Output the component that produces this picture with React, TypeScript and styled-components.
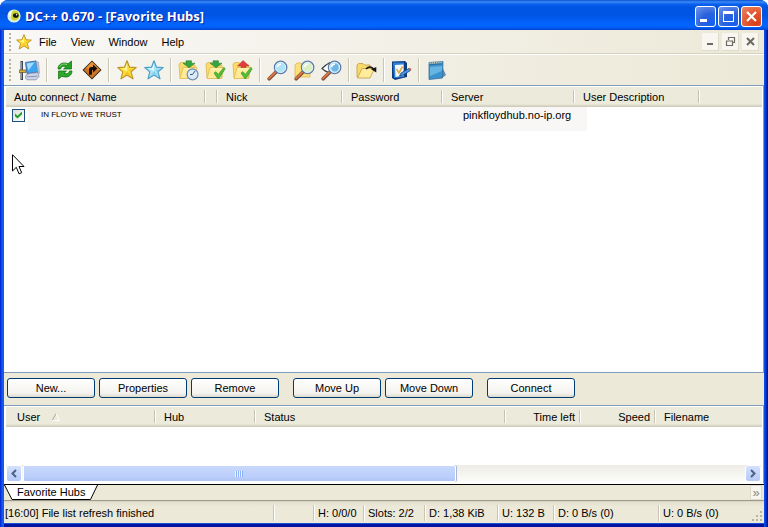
import React from "react";
import styled, { createGlobalStyle } from "styled-components";

const GlobalStyle = createGlobalStyle`
  * { box-sizing: border-box; }
  html, body { margin: 0; background: #fff; }
  body, button, input, table {
    font-family: "Liberation Sans", Arial, sans-serif;
    font-size: 11px;
    line-height: 14px;
    color: #000;
  }
  button { margin: 0; padding: 0; border: 0; background: none; }
  svg { display: block; }
`;

const Window = styled.main`
  display: flex;
  flex-direction: column;
  height: 100vh;
  min-height: 400px;
  border: 0 solid;
  border-radius: 8px 8px 0 0;
  overflow: hidden;
  background: linear-gradient(to right, #0019cf 0, #0a3fe0 1px, #1664f0 3px, #0b55e4 4px, #0b55e4 calc(100% - 4px), #0a4be8 calc(100% - 3px), #0030cc calc(100% - 2px), #00138c 100%);
`;

const TitleBar = styled.header`
  flex: none;
  display: flex;
  align-items: center;
  gap: 4px;
  height: 30px;
  padding: 2px 6px 0 7px;
  background: linear-gradient(to bottom, #0a4fd0 0, #3a8cf8 2px, #0b62ee 4px, #0054e3 7px, #0055e5 16px, #0262fb 22px, #0264fe 26px, #0059ee 28px, #0042cc 30px);
`;

const Title = styled.h1`
  flex: 1;
  margin: 0;
  font-family: "Noto Sans", "Open Sans", sans-serif;
  font-size: 13px;
  line-height: 20px;
  font-weight: 700;
  color: #fff;
  text-shadow: 1px 1px 0 #0a1883;
  white-space: nowrap;
`;

const CaptionButtons = styled.div`
  display: flex;
  gap: 2px;
`;

const CaptionButton = styled.button<{ $close?: boolean }>`
  display: grid;
  place-items: center;
  width: 21px;
  height: 21px;
  border: 1px solid #fff;
  border-radius: 3px;
  background: ${(p) =>
    p.$close
      ? "radial-gradient(circle at 75% 85%, #d8401a, #e2542c 45%, #e98a68 100%)"
      : "radial-gradient(circle at 75% 85%, #1560f0, #2c62dc 45%, #6f97ee 100%)"};
`;

const Client = styled.div`
  flex: 1;
  min-height: 0;
  display: flex;
  flex-direction: column;
  margin: 0 4px 4px 4px;
  background: #ece9d8;
  box-shadow: 0 1px 0 #1a4fd8, 0 4px 0 #0016a0;
`;

const MenuRow = styled.div`
  flex: none;
  display: flex;
  align-items: center;
  height: 24px;
  padding: 0 5px;
  background: linear-gradient(to right, #f9f8f6, #ece9d8);
  border-bottom: 1px solid #d5d2c0;
`;

const ToolRow = styled.div`
  flex: none;
  display: flex;
  align-items: center;
  height: 31px;
  padding: 0 5px;
  border-top: 1px solid #fff;
  background: linear-gradient(to right, #f6f5f0, #ece9d8);
`;

const Grip = styled.span<{ $tall?: boolean }>`
  flex: none;
  width: 2px;
  height: ${(p) => (p.$tall ? "22px" : "18px")};
  background: repeating-linear-gradient(to bottom, #b5b2a4 0 2px, transparent 2px 4px);
`;

const Menu = styled.nav`
  flex: 1;
  display: flex;
  align-items: center;
  margin-left: 5px;
  gap: 7px;
`;

const MenuItems = styled.div`
  display: flex;
  gap: 14px;
`;

const MdiButtons = styled.div`
  display: flex;
  gap: 3px;
`;

const MdiButton = styled.button`
  display: grid;
  place-items: center;
  width: 17px;
  height: 18px;
  background: #f7f6f1;
  border-right: 1px solid #dedbcb;
  border-bottom: 1px solid #dedbcb;
`;

const Tools = styled.div`
  display: flex;
  align-items: center;
  margin-left: 5px;
`;

const ToolButton = styled.button`
  display: grid;
  place-items: center;
  width: 27px;
  height: 26px;
`;

const Divider = styled.span`
  width: 2px;
  height: 24px;
  margin: 0 3px;
  background: linear-gradient(to right, #c9c6b6 50%, #fff 50%);
`;

const ListPane = styled.section<{ $fill?: boolean }>`
  position: relative;
  flex: ${(p) => (p.$fill ? "1 1 0" : "none")};
  height: ${(p) => (p.$fill ? "auto" : "79px")};
  min-height: 0;
  display: flex;
  flex-direction: column;
  border: 1px solid #7f9db9;
  border-left-width: 0;
  border-bottom-color: ${(p) => (p.$fill ? "#7f9db9" : "#fff")};
  padding: 1px 1px 1px 2px;
  background: #fff;
  overflow: hidden;
`;

const ListTable = styled.table`
  width: 100%;
  table-layout: fixed;
  border-collapse: separate;
  border-spacing: 0;
`;

const Col = styled.col<{ $w?: number }>`
  width: ${(p) => (p.$w ? `${p.$w}px` : "auto")};
`;

const headShade = "linear-gradient(to bottom, #ebeadb 17px, #e2decd 18px, #d6d2c2 19px, #cbc7b8 20px)";

const HeadCell = styled.th<{ $right?: boolean; $last?: boolean }>`
  height: 20px;
  padding: 0 ${(p) => (p.$right ? "6px" : "0")} 0 8px;
  text-align: ${(p) => (p.$right ? "right" : "left")};
  font-weight: 400;
  white-space: nowrap;
  background: ${(p) =>
    p.$last
      ? headShade
      : `linear-gradient(#fff, #fff) right 0 top 3px / 1px 13px no-repeat, linear-gradient(#c5c2b2, #c5c2b2) right 1px top 3px / 1px 13px no-repeat, ${headShade}`};
`;

const SortMark = styled.svg`
  display: inline-block;
  margin-left: 12px;
`;

const HubRow = styled.tr`
  background: linear-gradient(to right, transparent 22px, #f9f7f5 22px 581px, transparent 581px) no-repeat;
`;

const HubCell = styled.td<{ $indent?: boolean }>`
  height: 24px;
  padding: 0 0 8px ${(p) => (p.$indent ? "20px" : "6px")};
  white-space: nowrap;
`;

const HubName = styled.div`
  display: flex;
  align-items: center;
  gap: 16px;
`;

const HubLabel = styled.label`
  font-size: 8px;
`;

const Check = styled.input`
  appearance: none;
  flex: none;
  display: grid;
  place-items: center;
  width: 13px;
  height: 13px;
  margin: 0;
  border: 1px solid #1c5180;
  background: linear-gradient(135deg, #dcdcd7, #fff);
  &:checked::after {
    content: "";
    width: 7px;
    height: 7px;
    background: #21a121;
    clip-path: polygon(0 29%, 36% 62%, 100% 0, 100% 40%, 36% 100%, 0 68%);
  }
`;

const Pointer = styled.svg`
  position: absolute;
  left: 8px;
  top: 68px;
`;

const Actions = styled.div`
  flex: none;
  display: flex;
  gap: 14px;
  height: 32px;
  padding: 5px 3px;
`;

const ActionGroup = styled.div`
  display: flex;
  gap: 4px;
`;

const Action = styled.button`
  width: 88px;
  height: 20px;
  border: 1px solid #003c74;
  border-radius: 3px;
  background: linear-gradient(to bottom, #fff, #f3f2ed 80%, #dcd8cb);
`;

const ScrollBar = styled.div`
  flex: none;
  display: flex;
  gap: 1px;
  height: 17px;
  margin: auto 1px 0 0;
  background: linear-gradient(to bottom, #edece5, #fcfcfa);
`;

const ScrollButton = styled.button`
  flex: none;
  display: grid;
  place-items: center;
  width: 16px;
  height: 17px;
  border: 1px solid #fff;
  border-radius: 3px;
  background: linear-gradient(to bottom, #d4e0fd, #b5caf8);
`;

const Track = styled.div`
  flex: 1;
  display: flex;
`;

const Thumb = styled.div`
  display: grid;
  place-items: center;
  width: 60%;
  border: 1px solid #fff;
  border-radius: 2px;
  background: linear-gradient(to bottom, #c9d8fc, #bbcffb 70%, #b0c5f4);
  box-shadow: 1px 0 0 #a9b7d1;
`;

const ThumbLines = styled.span`
  width: 8px;
  height: 6px;
  background: repeating-linear-gradient(to right, #eef4fe 0 1px, #8cb0f8 1px 2px);
`;

const TabStrip = styled.div`
  flex: none;
  display: flex;
  align-items: flex-start;
  justify-content: space-between;
  height: 17px;
  border-top: 1px solid #000;
  border-bottom: 1px solid #9d9a8c;
`;

const Tab = styled.button`
  display: flex;
  height: 15px;
`;

const TabText = styled.span`
  height: 15px;
  padding: 0 4px 0 0;
  background: #fff;
  border-bottom: 1px solid #000;
`;

const Chevron = styled.button`
  width: 12px;
  height: 15px;
  margin-right: 2px;
  font-size: 13px;
  line-height: 12px;
  color: #8b887b;
  background: #f6f5ef;
  border: 1px solid #dedbcc;
`;

const StatusBar = styled.footer`
  flex: none;
  position: relative;
  display: flex;
  align-items: center;
  height: 22px;
  border-top: 1px solid #dad6c5;
  background: linear-gradient(to bottom, #e4e1d0, #ece9d8 5px);
`;

const Pane = styled.div<{ $w?: number }>`
  flex: ${(p) => (p.$w ? `0 0 ${p.$w}px` : "1 1 0")};
  height: 16px;
  padding: 1px 0 0 ${(p) => (p.$w ? "3px" : "1px")};
  border-left: ${(p) => (p.$w ? "1px solid #fff" : "0")};
  box-shadow: ${(p) => (p.$w ? "-1px 0 0 #c8c5b4" : "none")};
  white-space: nowrap;
  overflow: visible;
`;

const SizeGrip = styled.svg`
  position: absolute;
  right: 1px;
  bottom: 1px;
`;

const starPath = "M10 0.8 L12.5 7.2 L19.2 7.6 L14 11.8 L16 18.8 L10 15 L4 18.8 L5.8 11.9 L0.8 7.6 L7.5 7.2 Z";

function StarIcon({ size = 20, blue = false }: { size?: number; blue?: boolean }) {
  return (
    <svg width={size} height={size} viewBox="0 0 20 20">
      <path d={starPath} fill={blue ? "#a9e4fb" : "#ffdf35"} stroke={blue ? "#4a9fc6" : "#bd9426"} strokeWidth="1.2" strokeLinejoin="round" />
      <path d="M10 3 L10 11 L4 8.4 L8.2 8.2 Z" fill={blue ? "#e4f8ff" : "#fff6a0"} />
      <path d="M10 11 L14.5 17 L10 14 L6 17 Z M11 10 L16.8 8.4 L12.8 11.6 Z" fill={blue ? "#86cfee" : "#f7c22c"} />
    </svg>
  );
}

function ConnectIcon() {
  return (
    <svg width="21" height="21" viewBox="0 0 21 21">
      <path d="M1.5 1 H4 V20 H1.5 Z" fill="#3e4656" />
      <path d="M2.5 2 V19" stroke="#8d97ac" />
      <path d="M0 10 H7 V12.5 H0 Z" fill="#d9b23a" stroke="#54471a" strokeWidth=".6" />
      <path d="M6.5 2.5 L17 1 L19 12 L8 13.5 Z" fill="#3aa6ec" stroke="#4b6cae" />
      <path d="M7.5 3.5 L15.5 2.3 L9.5 10.5 Z" fill="#a4dcff" />
      <path d="M17 1 L19.6 2.2 L20.5 13.4 L18.8 12 Z" fill="#bcc6dc" stroke="#8391b4" strokeWidth=".5" />
      <path d="M7 15 L11 13.3 L19 12.6 L20 16.5 L17 19.8 H8 L6.5 18 Z" fill="#cfd5e8" stroke="#7481a6" strokeWidth=".7" />
      <path d="M8 16.8 L18.5 16.2" stroke="#8793b6" />
    </svg>
  );
}

function RefreshIcon() {
  return (
    <svg width="20" height="20" viewBox="0 0 20 20">
      <path d="M3 9 C3 4 8 1.5 13 3.8 L16.5 1 V9 H8.5 L11 6.7 C8 5.5 6 6.7 5.6 9 Z" fill="#25a022" stroke="#0d6a11" strokeWidth=".7" />
      <path d="M17 11 C17 16 12 18.5 7 16.2 L3.5 19 V11 H11.5 L9 13.3 C12 14.5 14 13.3 14.4 11 Z" fill="#2aaa28" stroke="#0d6a11" strokeWidth=".7" />
      <path d="M4.7 7 C6 4 9 3.4 12 4.6" stroke="#8fdc7d" fill="none" />
    </svg>
  );
}

function RedirectIcon() {
  return (
    <svg width="20" height="20" viewBox="0 0 20 20">
      <path d="M10 .5 L19.5 10 L10 19.5 L.5 10 Z" fill="#302013" />
      <path d="M10 1.8 L18.2 10 L10 18.2 L1.8 10 Z" fill="#c9762a" />
      <path d="M10 1.8 L18.2 10 H10 L4 8 Z" fill="#e59339" />
      <path d="M7 15 V9 Q7 7 9.5 7 H11 V4.5 L15.5 8.5 L11 12.5 V10 H10 V14.5 Z" fill="#15100b" />
    </svg>
  );
}

function FolderIcon({ up = false, clock = false }: { up?: boolean; clock?: boolean }) {
  return (
    <svg width="21" height="21" viewBox="0 0 21 21">
      <path d="M1 4 L3 2.5 H7 L9 5 H17 V18 H2 Z" fill="#fbdc6c" stroke="#dcb652" strokeWidth=".8" />
      <path d="M2 18.5 L5 7.5 H19 L16 18.5 Z" fill="#ffeb96" stroke="#dfb850" strokeWidth=".8" />
      <path d="M6 9 H17" stroke="#fff6c4" />
      {up ? (
        <path d="M11 .5 L17 6 H14 V7.5 H9 V6 H5.5 Z" fill="#e03d3c" stroke="#b52b28" strokeWidth=".5" />
      ) : (
        <path d="M8 .8 H13.5 V3.2 H17 L11 7.8 L5 3.2 H8 Z" fill="#36a541" stroke="#1f7a28" strokeWidth=".5" />
      )}
      {clock ? (
        <>
          <circle cx="14.6" cy="14.4" r="5.4" fill="#dcebf8" stroke="#7894b4" strokeWidth="1.3" />
          <path d="M14.5 14.5 L17 11 M14.5 14.5 H12" stroke="#395a86" fill="none" />
        </>
      ) : (
        <path d="M9 13 L11 11.7 L13.2 14.5 L18.8 7.5 L20.2 8.8 L14 18.5 H12.6 Z" fill="#54bf38" stroke="#2b8d20" strokeWidth=".6" />
      )}
    </svg>
  );
}

function SearchIcon({ folder = false, eye = false }: { folder?: boolean; eye?: boolean }) {
  return (
    <svg width="21" height="21" viewBox="0 0 21 21">
      {folder && <path d="M1 5 L3 3 H7 L9 5 H16 V17 H1 Z" fill="#fbe07a" stroke="#dcb652" strokeWidth=".8" />}
      {eye && <path d="M9 2.5 Q5 4.5 1 8.5 Q4 11.5 8 12.5" fill="#fff" stroke="#3c444e" strokeWidth="1.2" />}
      <path d="M8.5 12.5 L2.2 18.8" stroke="#7d5040" strokeWidth="3.6" strokeLinecap="round" />
      <path d="M8 12.5 L2 18.4" stroke="#e0763f" strokeWidth="1.8" strokeLinecap="round" />
      <circle cx="13.6" cy="7.4" r="6.2" fill={folder ? "#dcefc4" : "#aee3f6"} stroke="#6279aa" strokeWidth="1.3" />
      <circle cx="13.6" cy="7.4" r="5" fill="none" stroke="#d9f4fd" strokeWidth="1" />
      {eye && <ellipse cx="14" cy="7.6" rx="3.6" ry="4" fill="#6fb5e2" />}
      <path d="M10.5 7 Q11 4.5 14 4" stroke="#fff" strokeWidth="1.6" fill="none" />
    </svg>
  );
}

function OpenFolderIcon() {
  return (
    <svg width="21" height="21" viewBox="0 0 21 21">
      <path d="M1 5 L2.5 3.5 H7 L8.5 5 H14 V17 H1 Z" fill="#f8da68" stroke="#c39b3d" strokeWidth=".8" />
      <path d="M1.5 18 L6 8.5 H18.5 L14 18 Z" fill="#ffec9c" stroke="#c39b3d" strokeWidth=".8" />
      <path d="M10 9 C13 6 15 6.3 17.5 8.8" stroke="#151515" strokeWidth="1.6" fill="none" />
      <path d="M15 9.3 L20.3 7 V12.5 Z" fill="#151515" />
    </svg>
  );
}

function SettingsIcon() {
  return (
    <svg width="21" height="21" viewBox="0 0 21 21">
      <path d="M1 1.5 L14 1 L16 3 V17 L4 20 L1 18 Z" fill="#123c80" />
      <path d="M2 2.5 H13 V17 L3 18 Z" fill="#2f82d6" />
      <path d="M4 5 L12.5 4.5 V15.5 L4.5 17 Z" fill="#f4f8ff" />
      <path d="M5.5 9 L8 13 L11.5 6.5" stroke="#e0aa45" strokeWidth="1.6" fill="none" />
      <path d="M8.5 16 L10 13 L18 8.5 L19.5 10.5 L12 15 Z" fill="#4b9ae3" stroke="#18467e" strokeWidth=".8" />
      <path d="M17.3 8.5 L19 7.7 L20.6 9.5 L19 10.8 Z" fill="#db5e42" />
    </svg>
  );
}

function NotepadIcon() {
  return (
    <svg width="21" height="21" viewBox="0 0 21 21">
      <path d="M15 4 L20 15 L17.5 17 H9 Z" fill="#5e8cba" />
      <path d="M3 2.5 L17 1.5 L16.5 18 L3 19.5 Z" fill="#3b93cd" stroke="#3b6f9c" strokeWidth=".8" />
      <path d="M4 7 L16 6 L15.8 11 L4 16 Z" fill="#66b5e2" />
      <path d="M3.5 3.3 L16.5 2.3" stroke="#c9cbb4" strokeWidth="1.6" strokeDasharray="1.2 1" />
      <path d="M3.5 4.8 L16.5 3.8" stroke="#276493" strokeWidth=".8" />
    </svg>
  );
}

function AppIcon() {
  return (
    <svg width="14" height="14" viewBox="0 0 14 14">
      <circle cx="7" cy="7" r="6.6" fill="#e4eee9" />
      <path d="M4 2 Q12 0 12.5 7 Q11 12 6 11.5 Q2 9 4 2Z" fill="#c7d42e" />
      <ellipse cx="8.8" cy="6.5" rx="2.8" ry="2.3" fill="#10180b" />
      <circle cx="9.6" cy="5.8" r=".8" fill="#fff" />
      <path d="M1.5 5 Q3 2 6 2 Q3 5 4.5 9Z" fill="#fff" />
    </svg>
  );
}

const toolGroups: { label: string; icon: React.ReactNode }[][] = [
  [{ label: "Public Hubs", icon: <ConnectIcon /> }],
  [
    { label: "Reconnect", icon: <RefreshIcon /> },
    { label: "Follow last redirect", icon: <RedirectIcon /> },
  ],
  [
    { label: "Favorite Hubs", icon: <StarIcon /> },
    { label: "Favorite Users", icon: <StarIcon blue /> },
  ],
  [
    { label: "Download Queue", icon: <FolderIcon clock /> },
    { label: "Finished Downloads", icon: <FolderIcon /> },
    { label: "Finished Uploads", icon: <FolderIcon up /> },
  ],
  [
    { label: "Search", icon: <SearchIcon /> },
    { label: "ADL Search", icon: <SearchIcon folder /> },
    { label: "Search Spy", icon: <SearchIcon eye /> },
  ],
  [{ label: "Open file list", icon: <OpenFolderIcon /> }],
  [{ label: "Settings", icon: <SettingsIcon /> }],
  [{ label: "Notepad", icon: <NotepadIcon /> }],
];

const menus = ["File", "View", "Window", "Help"];
const actionGroups = [["New...", "Properties", "Remove"], ["Move Up", "Move Down"], ["Connect"]];

const hubColumns = [
  { label: "Auto connect / Name", width: 200 },
  { label: "", width: 12 },
  { label: "Nick", width: 125 },
  { label: "Password", width: 100 },
  { label: "Server", width: 132 },
  { label: "User Description", width: 125 },
];

const statusPanes = [
  { text: "", width: 40 },
  { text: "H: 0/0/0", width: 50 },
  { text: "Slots: 2/2", width: 61 },
  { text: "D: 1,38 KiB", width: 73 },
  { text: "U: 132 B", width: 56 },
  { text: "D: 0 B/s (0)", width: 105 },
  { text: "U: 0 B/s (0)", width: 105 },
];

export default function App() {
  return (
    <>
      <GlobalStyle />
      <Window>
        <TitleBar>
          <AppIcon />
          <Title>DC++ 0.670 - [Favorite Hubs]</Title>
          <CaptionButtons>
            <CaptionButton aria-label="Minimize">
              <svg width="15" height="15"><path d="M2 10h7v3H2z" fill="#fff" /></svg>
            </CaptionButton>
            <CaptionButton aria-label="Maximize">
              <svg width="15" height="15"><path d="M2 2h11v11H2zM3 5v7h9V5z" fill="#fff" fillRule="evenodd" /></svg>
            </CaptionButton>
            <CaptionButton $close aria-label="Close">
              <svg width="15" height="15"><path d="M3 3l9 9M12 3l-9 9" stroke="#fff" strokeWidth="2.2" /></svg>
            </CaptionButton>
          </CaptionButtons>
        </TitleBar>
        <Client>
          <MenuRow>
            <Grip />
            <Menu>
              <StarIcon size={16} />
              <MenuItems>
                {menus.map((m) => <button key={m}>{m}</button>)}
              </MenuItems>
            </Menu>
            <MdiButtons>
              <MdiButton aria-label="Minimize document">
                <svg width="11" height="11"><path d="M2 7h6v2H2z" fill="#6c6a5e" /></svg>
              </MdiButton>
              <MdiButton aria-label="Restore document">
                <svg width="11" height="11"><path d="M3 1.5H9.5V6.5H8M3.5 1V4M1 5H7.5V9.5H1.5V5" fill="none" stroke="#6c6a5e" strokeWidth="1.2" /></svg>
              </MdiButton>
              <MdiButton aria-label="Close document">
                <svg width="11" height="11"><path d="M2 2l7 7M9 2l-7 7" stroke="#6c6a5e" strokeWidth="2" /></svg>
              </MdiButton>
            </MdiButtons>
          </MenuRow>
          <ToolRow>
            <Grip $tall />
            <Tools>
              {toolGroups.map((group, i) => (
                <React.Fragment key={i}>
                  {i > 0 && <Divider />}
                  {group.map((t) => (
                    <ToolButton key={t.label} aria-label={t.label}>{t.icon}</ToolButton>
                  ))}
                </React.Fragment>
              ))}
            </Tools>
          </ToolRow>

          <ListPane $fill>
            <ListTable>
              <colgroup>
                {hubColumns.map((c, i) => <Col key={i} $w={c.width} />)}
                <Col />
              </colgroup>
              <thead>
                <tr>
                  {hubColumns.map((c, i) => <HeadCell key={i}>{c.label}</HeadCell>)}
                  <HeadCell $last />
                </tr>
              </thead>
              <tbody>
                <HubRow>
                  <HubCell>
                    <HubName>
                      <Check type="checkbox" id="hub-auto" defaultChecked />
                      <HubLabel htmlFor="hub-auto">IN FLOYD WE TRUST</HubLabel>
                    </HubName>
                  </HubCell>
                  <HubCell />
                  <HubCell />
                  <HubCell />
                  <HubCell $indent>pinkfloydhub.no-ip.org</HubCell>
                  <HubCell />
                  <HubCell />
                </HubRow>
              </tbody>
            </ListTable>
            <Pointer width="13" height="21" viewBox="0 0 13 21" aria-hidden="true">
              <path d="M.5 .7V17L4.3 13.3L7 19.8L9.7 18.7L7 12.5H12Z" fill="#fff" stroke="#000" />
            </Pointer>
          </ListPane>

          <Actions>
            {actionGroups.map((group) => (
              <ActionGroup key={group[0]}>
                {group.map((a) => <Action key={a}>{a}</Action>)}
              </ActionGroup>
            ))}
          </Actions>

          <ListPane>
            <ListTable>
              <colgroup>
                <Col $w={150} />
                <Col $w={100} />
                <Col $w={250} />
                <Col $w={75} />
                <Col $w={75} />
                <Col />
              </colgroup>
              <thead>
                <tr>
                  <HeadCell>
                    &nbsp;User
                    <SortMark width="9" height="8"><path d="M.5 7L4 .5" stroke="#aca899" /><path d="M4 .5L7.5 7.5H.5" stroke="#fff" fill="none" /></SortMark>
                  </HeadCell>
                  <HeadCell>Hub</HeadCell>
                  <HeadCell>Status</HeadCell>
                  <HeadCell $right>Time left</HeadCell>
                  <HeadCell $right>Speed</HeadCell>
                  <HeadCell $last>Filename</HeadCell>
                </tr>
              </thead>
            </ListTable>
            <ScrollBar>
              <ScrollButton aria-label="Scroll left">
                <svg width="8" height="9"><path d="M6 1L2.5 4.5L6 8" fill="none" stroke="#4d6185" strokeWidth="2" /></svg>
              </ScrollButton>
              <Track>
                <Thumb><ThumbLines /></Thumb>
              </Track>
              <ScrollButton aria-label="Scroll right">
                <svg width="8" height="9"><path d="M2 1L5.5 4.5L2 8" fill="none" stroke="#4d6185" strokeWidth="2" /></svg>
              </ScrollButton>
            </ScrollBar>
          </ListPane>

          <TabStrip>
            <Tab>
              <svg width="13" height="15"><path d="M1 0H13V15H8Z" fill="#fff" /><path d="M.5 0L8 14.5H13" fill="none" stroke="#000" /></svg>
              <TabText>Favorite Hubs</TabText>
              <svg width="9" height="15"><path d="M0 0H8.5L1.5 15H0Z" fill="#fff" /><path d="M8.5 0L1.5 14.5H0" fill="none" stroke="#000" /></svg>
            </Tab>
            <Chevron aria-label="More tabs">»</Chevron>
          </TabStrip>

          <StatusBar>
            <Pane>[16:00] File list refresh finished</Pane>
            {statusPanes.map((p, i) => <Pane key={i} $w={p.width}>{p.text}</Pane>)}
            <SizeGrip width="12" height="12" fill="#b8b4a2">
              <path d="M9 1h2v2H9zM5 5h2v2H5zM9 5h2v2H9zM1 9h2v2H1zM5 9h2v2H5zM9 9h2v2H9z" />
            </SizeGrip>
          </StatusBar>
        </Client>
      </Window>
    </>
  );
}
